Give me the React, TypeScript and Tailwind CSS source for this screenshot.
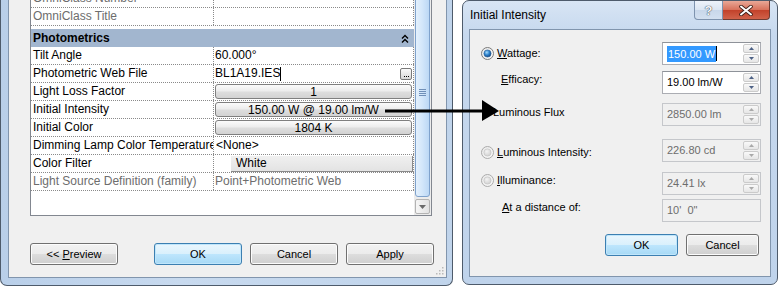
import React from "react";

const SANS = "font-['Liberation_Sans',Arial,sans-serif]";

function GBtn({ children, className = "" }: { children?: React.ReactNode; className?: string }) {
  return (
    <div
      className={`h-[15px] mt-[1px] mx-[1px] rounded-[3px] border border-[#7f7f7f] bg-[linear-gradient(#fbfbfb,#ededed_45%,#dddddd_55%,#d3d3d3)] flex items-center justify-center leading-none text-black ${className}`}
    >
      {children}
    </div>
  );
}

function Row({
  name,
  children,
  gray,
  className = "",
}: {
  name: string;
  children?: React.ReactNode;
  gray?: boolean;
  className?: string;
}) {
  return (
    <div className={`flex h-[18px] shrink-0 border-b border-dotted border-[#8a8a8a] ${className}`}>
      <div
        className={`w-[183px] shrink-0 border-r border-dotted border-[#8a8a8a] pl-[2px] whitespace-nowrap overflow-hidden leading-[17px] ${
          gray ? "text-[#6d6d6d]" : "text-black"
        }`}
      >
        {name}
      </div>
      <div className="w-[200px] shrink-0 border-r border-dotted border-[#8a8a8a] overflow-hidden">{children}</div>
    </div>
  );
}

function WinBtn({ children, primary, w }: { children: React.ReactNode; primary?: boolean; w: string }) {
  return (
    <div
      className={`${w} h-[22px] shrink-0 rounded-[3px] border flex items-center justify-center text-black ${
        primary
          ? "border-[#3c7fb1] bg-[linear-gradient(#eaf6fd,#d9f0fc_50%,#bee6fd_50%,#a7d9f5)] shadow-[inset_0_0_0_1px_#c0e6fb]"
          : "border-[#707070] bg-[linear-gradient(#f2f2f2,#ebebeb_50%,#dddddd_50%,#cfcfcf)] shadow-[inset_0_0_0_1px_#fcfcfc]"
      }`}
    >
      <span className="whitespace-pre">{children}</span>
    </div>
  );
}

function Chevrons() {
  return (
    <svg width="8" height="9" viewBox="0 0 8 9">
      <polyline points="1,4.5 4,1.5 7,4.5" fill="none" stroke="#000" strokeWidth="1.4" />
      <polyline points="1,8.5 4,5.5 7,8.5" fill="none" stroke="#000" strokeWidth="1.4" />
    </svg>
  );
}

function Scrollbar() {
  return (
    <div className="w-[17px] shrink-0 bg-[#ececec] flex flex-col">
      <div className="mt-[-12px] h-[209px] shrink-0 mx-[1px] rounded-[3px] border border-[#7fa2cc] bg-[linear-gradient(90deg,#e4f1fd,#d2e6fa_50%,#bcd8f5)] flex items-center justify-center">
        <div className="flex flex-col gap-[1px]">
          <div className="w-[7px] h-[1px] bg-[#6f8fb8]" />
          <div className="w-[7px] h-[1px] bg-[#6f8fb8]" />
          <div className="w-[7px] h-[1px] bg-[#6f8fb8]" />
          <div className="w-[7px] h-[1px] bg-[#6f8fb8]" />
        </div>
      </div>
      <div className="mt-[2px] h-[15px] mx-[1px] shrink-0 rounded-[2px] border border-[#b3b3b3] bg-[linear-gradient(90deg,#f6f6f6,#e2e2e2)] flex items-center justify-center">
        <svg width="7" height="4" viewBox="0 0 7 4">
          <path d="M0 0 L7 0 L3.5 4Z" fill="#6a6a6a" />
        </svg>
      </div>
    </div>
  );
}

function LeftWindow() {
  return (
    <div className="w-[453px] h-[286px] shrink-0 flex flex-col border-l border-r border-b border-[#4e5b6b] rounded-b-[7px] bg-[linear-gradient(90deg,#b9cfe9,#c8daef_40%,#c0d4eb)] pl-[7px] pr-[5px] pb-[7px]">
      <div className="flex-1 bg-[#f0f0f0] border-l border-r border-b border-[#8195ad] flex flex-col">
        <div className="ml-[21px] w-[402px] h-[216px] shrink-0 border-l border-r border-b border-[#828790] bg-white flex overflow-hidden">
          <div className="w-[383px] shrink-0 flex flex-col text-[12px]">
            <Row name="OmniClass Number" gray className="mt-[-10px]" />
            <Row name="OmniClass Title" gray />
            <div className="h-[3px] shrink-0" />
            <div className="h-[18px] shrink-0 bg-[#a2b6cf] flex items-center pl-[2px] font-bold leading-[18px]">
              <span>Photometrics</span>
              <span className="ml-auto mr-[5px] flex">
                <Chevrons />
              </span>
            </div>
            <Row name="Tilt Angle">
              <div className="pl-[1px] leading-[17px]">60.000°</div>
            </Row>
            <Row name="Photometric Web File">
              <div className="pl-[1px] h-[17px] flex items-center">
                <span className="leading-[17px]">BL1A19.IES</span>
                <span className="w-[1px] h-[14px] bg-black" />
                <span className="ml-auto mr-[1px] w-[12px] h-[12px] rounded-[2px] border border-[#7a7a7a] bg-[linear-gradient(#fafafa,#d8d8d8)] flex items-end justify-center pb-[2px] gap-[1px]">
                  <span className="w-[1px] h-[1px] bg-black" />
                  <span className="w-[1px] h-[1px] bg-black" />
                  <span className="w-[1px] h-[1px] bg-black" />
                </span>
              </div>
            </Row>
            <Row name="Light Loss Factor">
              <GBtn>1</GBtn>
            </Row>
            <Row name="Initial Intensity">
              <GBtn>150.00 W @ 19.00 lm/W</GBtn>
            </Row>
            <Row name="Initial Color">
              <GBtn>1804 K</GBtn>
            </Row>
            <Row name="Dimming Lamp Color Temperature">
              <div className="pl-[2px] leading-[17px]">&lt;None&gt;</div>
            </Row>
            <Row name="Color Filter">
              <div className="flex h-[17px]">
                <div className="w-[17px] shrink-0 bg-white" />
                <div className="flex-1 mt-[1px] bg-[linear-gradient(#f0f0f0,#e3e3e3)] border-r border-b border-[#8a8a8a] pl-[5px] leading-[15px]">
                  White
                </div>
              </div>
            </Row>
            <Row name="Light Source Definition (family)" gray>
              <div className="pl-[1px] leading-[17px] text-[#6d6d6d]">Point+Photometric Web</div>
            </Row>
          </div>
          <Scrollbar />
        </div>
        <div className="mt-[27px] ml-[21px] flex text-[11px]">
          <WinBtn w="w-[88px]">
            {"<< "}
            <u>P</u>review
          </WinBtn>
          <div className="w-[36px] shrink-0" />
          <WinBtn w="w-[88px]" primary>
            OK
          </WinBtn>
          <div className="w-[8px] shrink-0" />
          <WinBtn w="w-[88px]">Cancel</WinBtn>
          <div className="w-[8px] shrink-0" />
          <WinBtn w="w-[88px]">Apply</WinBtn>
        </div>
        <div className="flex-1 flex items-end justify-end pr-[2px] pb-[2px]">
          <svg width="8" height="8" viewBox="0 0 8 8">
            <rect x="6" y="0" width="1.5" height="1.5" fill="#b9b9b9" />
            <rect x="3" y="3" width="1.5" height="1.5" fill="#b9b9b9" />
            <rect x="6" y="3" width="1.5" height="1.5" fill="#b9b9b9" />
            <rect x="0" y="6" width="1.5" height="1.5" fill="#b9b9b9" />
            <rect x="3" y="6" width="1.5" height="1.5" fill="#b9b9b9" />
            <rect x="6" y="6" width="1.5" height="1.5" fill="#b9b9b9" />
          </svg>
        </div>
      </div>
    </div>
  );
}

function Radio({ checked }: { checked?: boolean }) {
  return (
    <svg width="13" height="13" viewBox="0 0 13 13" className="shrink-0">
      <defs>
        <linearGradient id="rg-out" x1="0" y1="0" x2="1" y2="1">
          <stop offset="0" stopColor="#e9e9e9" />
          <stop offset="1" stopColor="#f8f8f8" />
        </linearGradient>
        <radialGradient id="rg-dot" cx="0.4" cy="0.35" r="0.7">
          <stop offset="0" stopColor="#a6dcfc" />
          <stop offset="0.5" stopColor="#2f84cf" />
          <stop offset="1" stopColor="#0d3f7b" />
        </radialGradient>
        <radialGradient id="rg-off" cx="0.4" cy="0.35" r="0.7">
          <stop offset="0" stopColor="#f3f3f3" />
          <stop offset="1" stopColor="#cfcfcf" />
        </radialGradient>
      </defs>
      <circle cx="6.5" cy="6.5" r="6" fill="url(#rg-out)" stroke={checked ? "#7b7b7b" : "#ababab"} />
      <circle cx="6.5" cy="6.5" r="3.6" fill={checked ? "url(#rg-dot)" : "url(#rg-off)"} stroke={checked ? "#2b5f96" : "#c0c0c0"} strokeWidth="0.6" />
    </svg>
  );
}

function SpinArrow({ up, disabled }: { up?: boolean; disabled?: boolean }) {
  return (
    <div className="flex-1 rounded-[2px] border border-[#cbcbcb] bg-[linear-gradient(#f9f9f9,#e6e6e6)] flex items-center justify-center">
      <svg width="5" height="3" viewBox="0 0 5 3">
        <path d={up ? "M0 3 L2.5 0 L5 3Z" : "M0 0 L5 0 L2.5 3Z"} fill={disabled ? "#a9a9a9" : "#4d6185"} />
      </svg>
    </div>
  );
}

function Field({
  text,
  disabled,
  selected,
  spin = true,
}: {
  text: string;
  disabled?: boolean;
  selected?: boolean;
  spin?: boolean;
}) {
  return (
    <div
      className={`ml-auto w-[99px] h-[23px] shrink-0 flex border ${
        disabled ? "border-[#c5c7cb] bg-[#f0f0f0]" : "border-[#abadb3] border-t-[#8e9299] bg-white"
      }`}
    >
      <div className={`flex-1 pl-[4px] flex items-center whitespace-pre ${disabled ? "text-[#6d6d6d]" : "text-black"}`}>
        {selected ? (
          <>
            <span className="bg-[#3399ff] text-white px-[1px] leading-[16px]">{text}</span>
            <span className="w-[1px] h-[15px] bg-black" />
          </>
        ) : (
          text
        )}
      </div>
      {spin && (
        <div className="w-[18px] shrink-0 flex flex-col gap-[1px] p-[1px]">
          <SpinArrow up disabled={disabled} />
          <SpinArrow disabled={disabled} />
        </div>
      )}
    </div>
  );
}

function RightWindow() {
  return (
    <div className="w-[316px] h-[285px] shrink-0 flex flex-col border border-[#4e5b6b] rounded-[7px] bg-[linear-gradient(#d8e5f4,#c6d8ee_12%,#bfd3eb)] px-[6px] pb-[7px]">
      <div className="h-[28px] shrink-0 flex items-start">
        <div className="pt-[7px] pl-[1px] text-[12px] leading-[15px] text-black">Initial Intensity</div>
        <div className="ml-auto mr-[1px] flex">
          <div className="w-[29px] h-[19px] rounded-bl-[4px] border border-t-0 border-[#7e93ae] bg-[linear-gradient(#eef3fa,#dbe5f2_50%,#c8d7ea_50%,#d3e0f0)] flex items-center justify-center">
            <span className="text-[13px] font-bold leading-none text-[#f5f7fa] [text-shadow:0_0_1px_#34404f,0_0_1px_#34404f]">?</span>
          </div>
          <div className="w-[47px] h-[19px] rounded-br-[4px] border border-l-0 border-t-0 border-[#6e3c33] bg-[linear-gradient(#e9a897,#d7705a_50%,#c2412a_50%,#d0624a)] flex items-center justify-center">
            <svg width="14" height="11" viewBox="0 0 14 11">
              <path d="M2 1.5 L12 9.5 M12 1.5 L2 9.5" stroke="#3b1d16" strokeWidth="3.6" strokeLinecap="round" />
              <path d="M2 1.5 L12 9.5 M12 1.5 L2 9.5" stroke="#ffffff" strokeWidth="2" strokeLinecap="round" />
            </svg>
          </div>
        </div>
      </div>
      <div className="flex-1 bg-[#f0f0f0] border border-[#8195ad] flex flex-col text-[11px] text-black pr-[9px]">
        <div className="mt-[12px] flex items-start">
          <div className="mt-[4px] h-[14px] ml-[11px] flex items-center">
            <Radio checked />
            <span className="ml-[3px] leading-[14px]">
              <u>W</u>attage:
            </span>
          </div>
          <Field text="150.00 W" selected />
        </div>
        <div className="mt-[6px] flex items-start">
          <div className="mt-[1px] h-[14px] ml-[31px] leading-[14px]">
            <u>E</u>fficacy:
          </div>
          <Field text="19.00 lm/W" />
        </div>
        <div className="mt-[9px] flex items-start">
          <div className="mt-[2px] h-[14px] ml-[23px] leading-[14px]">Luminous Flux</div>
          <Field text="2850.00 lm" disabled />
        </div>
        <div className="mt-[13px] flex items-start">
          <div className="mt-[6px] h-[14px] ml-[11px] flex items-center">
            <Radio />
            <span className="ml-[3px] leading-[14px]">
              <u>L</u>uminous Intensity:
            </span>
          </div>
          <Field text="226.80 cd" disabled />
        </div>
        <div className="mt-[10px] flex items-start">
          <div className="mt-[1px] h-[14px] ml-[11px] flex items-center">
            <Radio />
            <span className="ml-[3px] leading-[14px]">
              <u>I</u>lluminance:
            </span>
          </div>
          <Field text="24.41 lx" disabled />
        </div>
        <div className="mt-[4px] flex items-start">
          <div className="mt-[1px] h-[14px] ml-[32px] leading-[14px]">
            <u>A</u>t a distance of:
          </div>
          <Field text={"10'  0\""} disabled spin={false} />
        </div>
        <div className="mt-[12px] flex justify-end pr-[2px]">
          <WinBtn w="w-[73px]" primary>
            OK
          </WinBtn>
          <div className="w-[8px] shrink-0" />
          <WinBtn w="w-[73px]">Cancel</WinBtn>
        </div>
      </div>
    </div>
  );
}

function Arrow() {
  return (
    <svg className="absolute left-[380px] top-[96px]" width="125" height="30" viewBox="0 0 125 30">
      <line x1="5" y1="15" x2="104" y2="15" stroke="#000" strokeWidth="3" />
      <path d="M102 4 L119 15 L102 25 Z" fill="#000" />
    </svg>
  );
}

export default function App() {
  return (
    <div className={`relative w-[778px] h-[286px] bg-white overflow-hidden flex items-start ${SANS}`}>
      <LeftWindow />
      <div className="w-[9px] shrink-0" />
      <RightWindow />
      <Arrow />
    </div>
  );
}
